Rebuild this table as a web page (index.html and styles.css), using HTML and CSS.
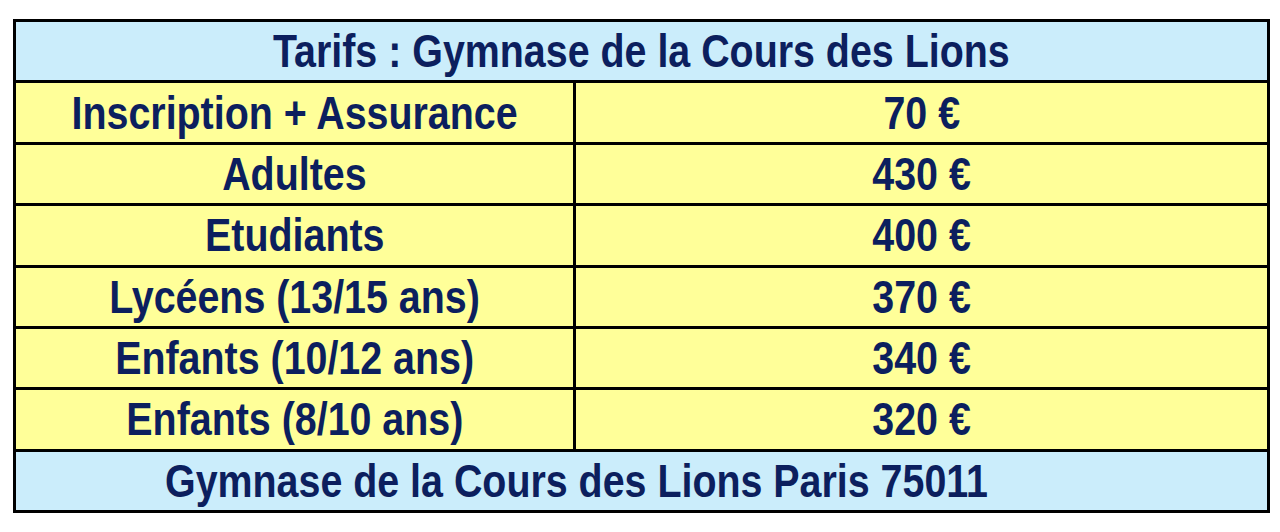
FILE: index.html
```html
<!DOCTYPE html>
<html lang="fr">
<head>
<meta charset="utf-8">
<title>Tarifs : Gymnase de la Cours des Lions</title>
<link rel="stylesheet" href="styles.css">
</head>
<body>
<div class="tarifs">
  <div class="cell head span"><span class="txt">Tarifs : Gymnase de la Cours des Lions</span></div>
  <div class="cell"><span class="txt">Inscription + Assurance</span></div>
  <div class="cell"><span class="txt">70 €</span></div>
  <div class="cell"><span class="txt">Adultes</span></div>
  <div class="cell"><span class="txt">430 €</span></div>
  <div class="cell"><span class="txt">Etudiants</span></div>
  <div class="cell"><span class="txt">400 €</span></div>
  <div class="cell"><span class="txt">Lycéens (13/15 ans)</span></div>
  <div class="cell"><span class="txt">370 €</span></div>
  <div class="cell"><span class="txt">Enfants (10/12 ans)</span></div>
  <div class="cell"><span class="txt">340 €</span></div>
  <div class="cell"><span class="txt">Enfants (8/10 ans)</span></div>
  <div class="cell"><span class="txt">320 €</span></div>
  <div class="cell foot span"><span class="txt">Gymnase de la Cours des Lions Paris 75011</span></div>
</div>
</body>
</html>
```
FILE: styles.css
```css
html, body {
  margin: 0;
  padding: 0;
  background: #ffffff;
}
.tarifs {
  margin: 19px 0 0 13px;
  width: 1257px;
  height: 494px;
  box-sizing: border-box;
  padding: 3px;
  background: #000000;
  display: grid;
  grid-template-columns: 557px 691px;
  grid-template-rows: repeat(8, 1fr);
  gap: 3px;
}
.cell {
  background: #ffff99;
  color: #0c1f5e;
  font-family: "Liberation Sans", Arial, sans-serif;
  font-weight: bold;
  font-size: 46px;
  display: flex;
  align-items: center;
  justify-content: center;
  white-space: nowrap;
  overflow: hidden;
}
.txt {
  display: inline-block;
  transform: scaleX(0.856);
  transform-origin: center center;
}
.span {
  grid-column: 1 / -1;
  background: #cbedfb;
}
.foot {
  justify-content: flex-start;
  padding-left: 149px;
}
.foot .txt {
  transform-origin: left center;
}
```
